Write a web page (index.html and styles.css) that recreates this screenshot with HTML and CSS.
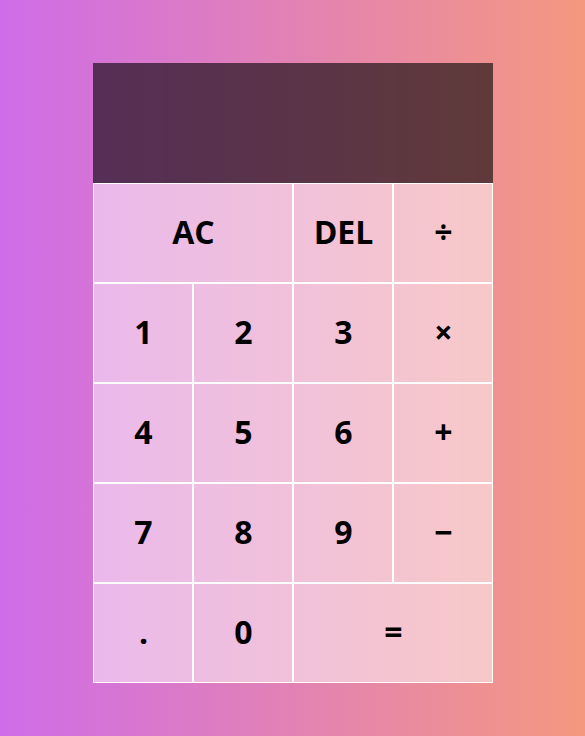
FILE: index.html
```html
<!DOCTYPE html>
<html lang="en">
<head>
<meta charset="utf-8">
<title>Calculator</title>
<link rel="stylesheet" href="styles.css">
</head>
<body>
<div class="calculator-grid">
  <div class="output">
    <div class="previous-operand"></div>
    <div class="current-operand"></div>
  </div>
  <button class="span-two">AC</button>
  <button>DEL</button>
  <button>÷</button>
  <button>1</button>
  <button>2</button>
  <button>3</button>
  <button>×</button>
  <button>4</button>
  <button>5</button>
  <button>6</button>
  <button>+</button>
  <button>7</button>
  <button>8</button>
  <button>9</button>
  <button>−</button>
  <button>.</button>
  <button>0</button>
  <button class="span-two">=</button>
</div>
</body>
</html>
```
FILE: styles.css
```css
*, *::before, *::after {
  box-sizing: border-box;
}
html, body {
  margin: 0;
  padding: 0;
}
body {
  height: 736px;
  background: linear-gradient(to right, #cf6ce9, #f5987f);
  font-family: "Open Sans", "Noto Sans", sans-serif;
}
.calculator-grid {
  display: grid;
  justify-content: center;
  padding-top: 63px;
  grid-template-columns: repeat(4, 100px);
  grid-template-rows: 120px repeat(5, 100px);
}
.calculator-grid > button {
  cursor: pointer;
  font-family: "Open Sans", "Noto Sans", sans-serif;
  font-size: 32px;
  font-weight: 700;
  color: #000;
  border: 1px solid #fff;
  outline: none;
  padding: 0 0 4px 2px;
  margin: 0;
  background-color: rgba(255, 255, 255, 0.5);
}
.span-two {
  grid-column: span 2;
}
.output {
  grid-column: 1 / -1;
  background-color: rgba(0, 0, 0, 0.6);
  display: flex;
  flex-direction: column;
  align-items: flex-end;
  justify-content: space-around;
  padding: 10px;
}
```
